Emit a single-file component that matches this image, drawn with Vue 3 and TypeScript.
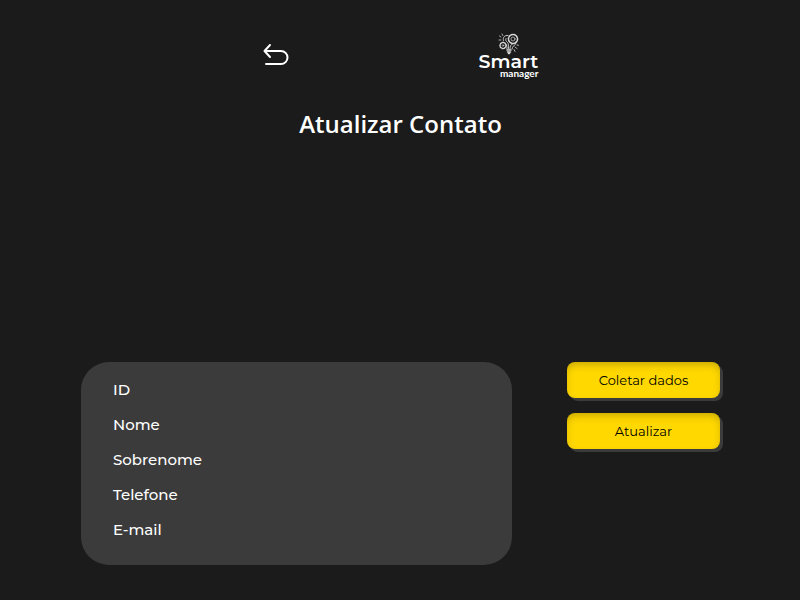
<script setup lang="ts">
const fields: string[] = ['ID', 'Nome', 'Sobrenome', 'Telefone', 'E-mail']
const actions: string[] = ['Coletar dados', 'Atualizar']
</script>

<template>
  <div class="page">
    <header class="top">
      <a class="back" href="#" aria-label="Voltar">
        <svg viewBox="0 0 26 24" width="26" height="24" fill="none" stroke="#fff" stroke-width="2" stroke-linecap="round" stroke-linejoin="round">
          <path d="M7 2 1.500 8 7 14M2 8h16a6.500 6.500 0 0 1 0 13H3" />
        </svg>
      </a>
      <a class="logo" href="#">
        <svg class="bulb" viewBox="0 0 22 22" width="22" height="22" fill="none" stroke="#d8d8d8" stroke-linecap="round">
          <circle cx="15" cy="6" r="4.500" stroke-width="1.600" stroke-dasharray="1.500 1.200" />
          <circle cx="15" cy="6" r="2" stroke-width="0.700" />
          <circle cx="5" cy="12.500" r="3" stroke-width="1.400" stroke-dasharray="1.200 1" />
          <circle cx="5" cy="12.500" r="0.800" stroke-width="0.600" />
          <path stroke-width="0.900" d="M10 2.500C6.500 2 4.500 4.500 5.500 7.500M8 5.500c-1 2 .5 3 1.500 4s1 3 1 6M12 16c0-3 .5-4 2.500-5M7.500 10.500c1.500 1 1.500 3 1.500 5.500M18 10c-1 3-4 3-4 6" />
          <path stroke-width="1.500" d="M9 17h4M9.500 19h3M10.500 20.500h1" />
          <path stroke-width="0.800" d="M1.500 3 3 4M4 1l.8 1.500M1 7h2M17 14l2 1.500M16 16.500l1 2M19 12l1.500.3" />
        </svg>
        <span class="brand">Smart</span>
        <span class="sub">manager</span>
      </a>
    </header>

    <h1>Atualizar Contato</h1>

    <main class="content">
      <ul class="panel">
        <li v-for="field in fields" :key="field">{{ field }}</li>
      </ul>
      <div class="actions">
        <button v-for="action in actions" :key="action" type="button">{{ action }}</button>
      </div>
    </main>
  </div>
</template>

<style>
body {
  margin: 0;
  background: #1b1b1b;
}
</style>

<style scoped>
.page {
  box-sizing: border-box;
  min-height: 100vh;
  padding: 33px 80px 32px 81px;
  color: #fff;
  font-family: Montserrat, Inter, sans-serif;
}
.top {
  display: flex;
  justify-content: center;
  align-items: center;
  gap: 190px;
}
.back,
.bulb {
  display: block;
}
.back {
  padding-top: 4px;
}
.logo {
  display: flex;
  flex-direction: column;
  align-items: center;
  color: #fff;
  text-decoration: none;
}
.brand {
  font-size: 19px;
  line-height: 14px;
  font-weight: 600;
}
.sub {
  align-self: flex-end;
  font-family: Lato, sans-serif;
  font-size: 10px;
  line-height: 8px;
  font-weight: 700;
}
h1 {
  margin: 31px 0 0;
  text-align: center;
  font: 600 24px/32px "Open Sans", sans-serif;
}
.content {
  display: flex;
  align-items: flex-start;
  gap: 55px;
  margin-top: 222px;
}
.panel {
  flex: 1;
  margin: 0;
  padding: 10px 32px 18px;
  list-style: none;
  background: #3b3b3b;
  border-radius: 28px;
  font-size: 15px;
  font-weight: 500;
  line-height: 35px;
}
.actions {
  display: flex;
  flex-direction: column;
  gap: 15px;
  width: 153px;
}
button {
  height: 36px;
  padding: 0;
  border: 0;
  border-radius: 8px;
  background: #ffd800;
  box-shadow: 3px 3px 0 #3b3b3b, inset 0 4px 8px -2px rgba(0, 0, 0, 0.25);
  color: #000;
  font-family: inherit;
  font-size: 13px;
  cursor: pointer;
}
</style>
